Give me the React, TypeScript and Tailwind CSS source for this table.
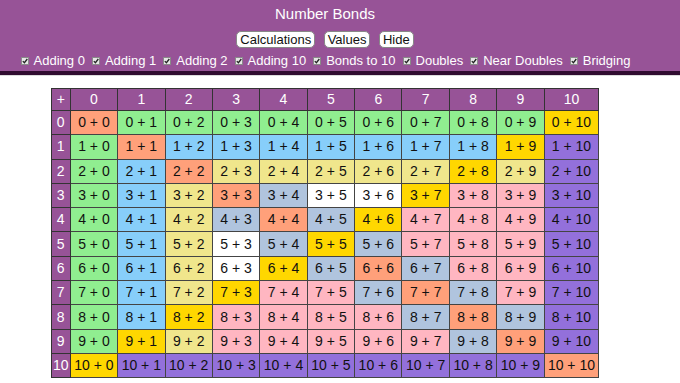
import React from "react";

const FONT = { fontFamily: '"Liberation Sans", Arial, sans-serif' };

const OPTIONS = [
  "Adding 0",
  "Adding 1",
  "Adding 2",
  "Adding 10",
  "Bonds to 10",
  "Doubles",
  "Near Doubles",
  "Bridging",
];

const NUMS = [0, 1, 2, 3, 4, 5, 6, 7, 8, 9, 10];

// which rule colours a cell, first match wins
const cellColour = (a: number, b: number) => {
  if (a + b === 10) return "bg-[#ffd700]";
  if (a === b) return "bg-[#ffa07a]";
  if (a === 0 || b === 0) return "bg-[#90ee90]";
  if (a === 10 || b === 10) return "bg-[#9370db]";
  if (a === 1 || b === 1) return "bg-[#87cefa]";
  if (a === 2 || b === 2) return "bg-[#f0e68c]";
  if (Math.abs(a - b) === 1) return "bg-[#b0c4de]";
  if (a + b > 10) return "bg-[#ffb6c1]";
  return "bg-white";
};

const Check = () => (
  <span className="w-[8px] h-[8px] border border-[#8a8a8a] bg-[#e6e6e6] flex items-center justify-center mr-[5px]">
    <svg width="6" height="6" viewBox="0 0 6 6">
      <path d="M0.8 3.1 L2.4 4.7 L5.3 1" stroke="#222" strokeWidth="1.3" fill="none" />
    </svg>
  </span>
);

export default function App() {
  return (
    <div className="w-[680px] h-[383px] bg-white overflow-hidden" style={FONT}>
      <header className="bg-[#975397] border-b-4 border-[#300c30]">
        <div className="w-[650px] h-[71px] flex flex-col items-center pt-[5px] text-white">
          <h1 className="text-[15px] leading-[18px] font-normal">Number Bonds</h1>
          <div className="flex gap-[8.5px] mt-[8px]">
            {["Calculations", "Values", "Hide"].map((b) => (
              <button
                key={b}
                className="bg-white text-[#111] text-[13px] leading-[15px] px-[3px] border border-[#888] rounded-[5px]"
              >
                {b}
              </button>
            ))}
          </div>
          <div className="flex items-center mt-[5px] h-[16px] text-[13px] leading-[16px] pl-[8px]">
            {OPTIONS.map((o) => (
              <label key={o} className="flex items-center mr-[7px]">
                <Check />
                {o}
              </label>
            ))}
          </div>
        </div>
      </header>
      <div className="h-px bg-[#dcdcdc]" />
      <div className="w-[650px] flex justify-center mt-[12px]">
        <table className="table-fixed border-collapse w-[548px] text-[14px] text-[#111]">
          <thead>
            <tr className="h-[19.5px]">
              <th className="w-[19px] bg-[#975397] text-white font-normal border border-[#333] p-0">+</th>
              {NUMS.map((n) => (
                <th
                  key={n}
                  className={`${n === 10 ? "w-[54.6px]" : "w-[47.4px]"} bg-[#975397] text-white font-normal border border-[#333] p-0`}
                >
                  {n}
                </th>
              ))}
            </tr>
          </thead>
          <tbody>
            {NUMS.map((a) => (
              <tr key={a} className="h-[24.3px]">
                <th className="bg-[#975397] text-white font-normal border border-[#333] p-0">{a}</th>
                {NUMS.map((b) => (
                  <td key={b} className={`${cellColour(a, b)} border border-[#444] text-center p-0`}>
                    {a} + {b}
                  </td>
                ))}
              </tr>
            ))}
          </tbody>
        </table>
      </div>
    </div>
  );
}
